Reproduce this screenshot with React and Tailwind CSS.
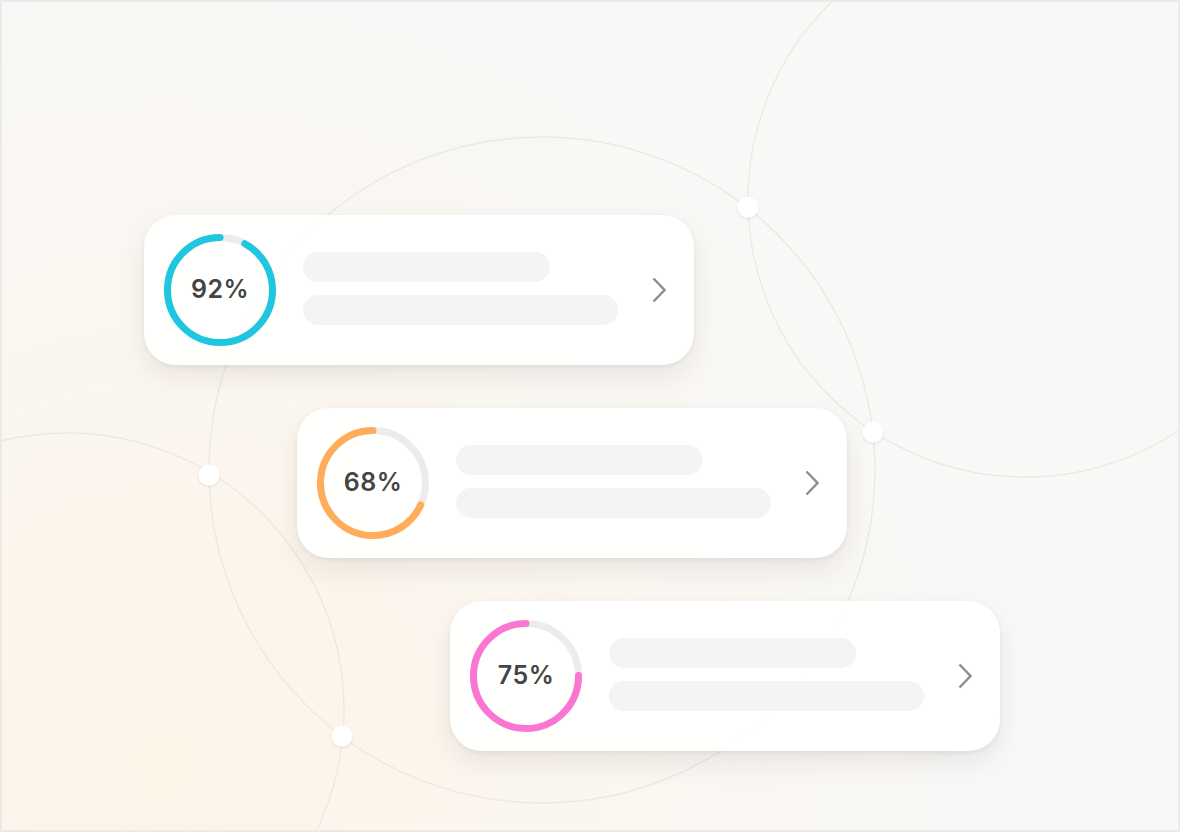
import React from "react";

const cards = [
  { value: 92, color: "#1fc6df", indent: "ml-[142px]" },
  { value: 68, color: "#ffad5b", indent: "ml-[295px]" },
  { value: 75, color: "#fb76d3", indent: "ml-[448px]" },
];

const nodes = [
  [748, 207],
  [873, 432],
  [209, 475],
  [342, 736],
];

function Backdrop() {
  return (
    <svg className="absolute inset-0 pointer-events-none" width="1176" height="828" viewBox="2 2 1176 828">
      <defs>
        <filter id="nodeShadow" x="-50%" y="-50%" width="200%" height="200%">
          <feDropShadow dx="0" dy="1" stdDeviation="1.2" floodColor="#000" floodOpacity="0.12" />
        </filter>
      </defs>
      <g fill="none" stroke="#eae9e6" strokeWidth="1.4">
        <circle cx="542" cy="470" r="333" />
        <circle cx="1025" cy="200" r="277" />
        <circle cx="67" cy="710" r="277" />
      </g>
      {nodes.map(([x, y]) => (
        <circle key={`${x}-${y}`} cx={x} cy={y} r="10.5" fill="#ffffff" filter="url(#nodeShadow)" />
      ))}
    </svg>
  );
}

function Ring({ value, color }) {
  const r = 52.5;
  const len = 2 * Math.PI * r;
  return (
    <div className="relative w-[112px] h-[112px] shrink-0">
      <svg width="112" height="112" viewBox="-56 -56 112 112" className="absolute inset-0">
        <circle r={r} fill="none" stroke="#ececec" strokeWidth="7" />
        <circle
          r={r}
          fill="none"
          stroke={color}
          strokeWidth="7"
          strokeLinecap="round"
          strokeDasharray={`${(len * value) / 100} ${len}`}
          transform="rotate(90) scale(-1 1)"
        />
      </svg>
      <div className="absolute inset-0 flex items-center justify-center font-['Inter',sans-serif] font-semibold text-[25px] text-[#444446] tracking-[0.02em]">
        {value}%
      </div>
    </div>
  );
}

function Card({ value, color, indent }) {
  return (
    <div
      className={`${indent} w-[550px] h-[150px] rounded-[32px] bg-white/[0.93] shadow-[0_12px_28px_rgba(40,30,20,0.08),0_2px_5px_rgba(0,0,0,0.06)] flex items-center pl-5 pr-[26px]`}
    >
      <Ring value={value} color={color} />
      <div className="ml-[27px] mb-[3px] flex flex-col gap-[13px]">
        <div className="w-[247px] h-[30px] rounded-full bg-[#f5f4f4]" />
        <div className="w-[315px] h-[30px] rounded-full bg-[#f5f4f4]" />
      </div>
      <svg className="ml-auto" width="18" height="28" viewBox="0 0 18 28" fill="none">
        <path d="M3.5 2.5 L14.5 14 L3.5 25.5" stroke="#8e8e93" strokeWidth="2.5" />
      </svg>
    </div>
  );
}

export default function App() {
  return (
    <div className="w-[1180px] h-[832px] border-2 border-[#ebeae8] bg-[#f9f8f6] bg-[radial-gradient(circle_at_14%_92%,#fcf4e7_0%,#fbf6ef_30%,#f9f8f6_62%)] relative overflow-hidden">
      <Backdrop />
      <div className="relative flex flex-col gap-[43px] pt-[213px]">
        {cards.map((c) => (
          <Card key={c.value} {...c} />
        ))}
      </div>
    </div>
  );
}
